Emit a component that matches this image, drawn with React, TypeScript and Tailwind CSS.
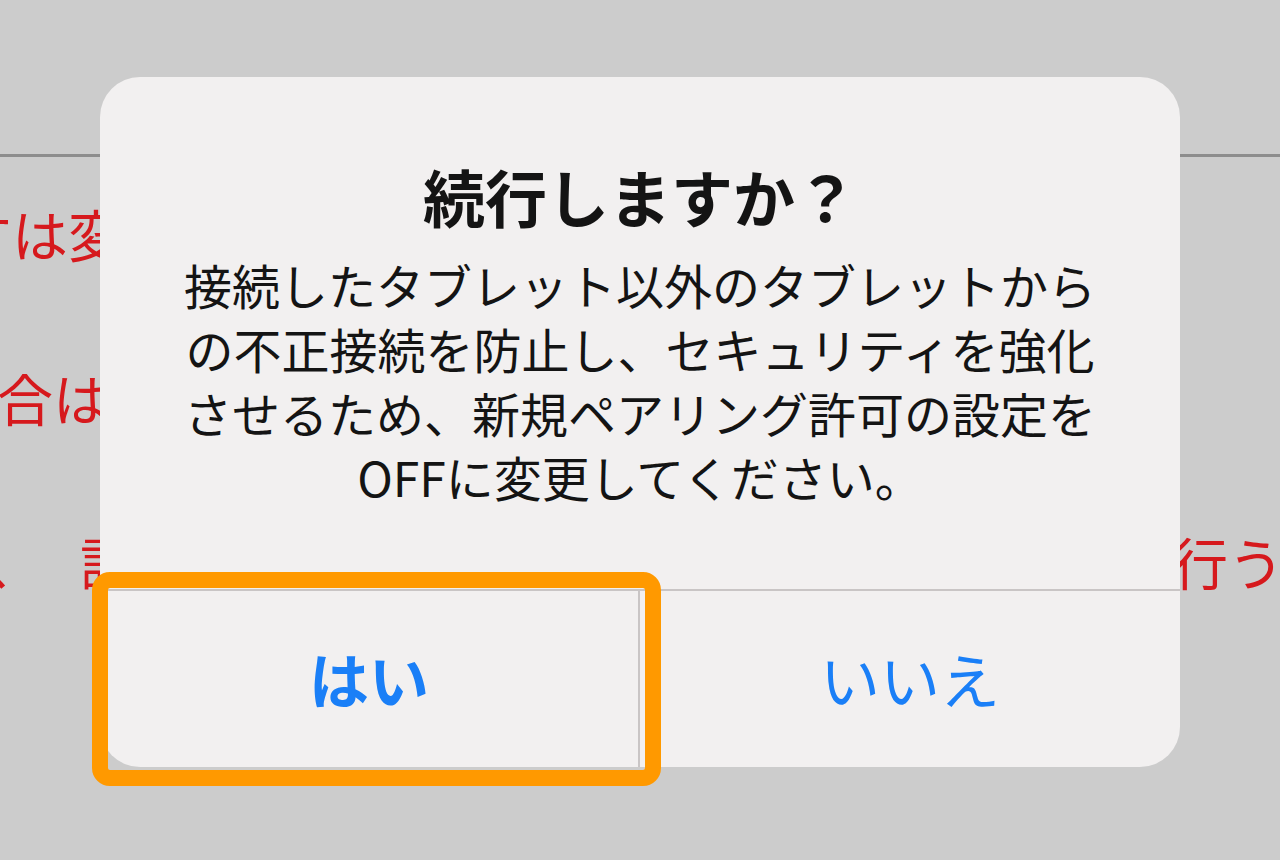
const jp = { fontFamily: '"Noto Sans CJK JP", "Noto Sans", sans-serif' };

function BackgroundPage() {
  return (
    <div className="flex h-full flex-col">
      <div className="h-[157px] border-b-[3px] border-[#8d8d8d]" />
      <div className="flex flex-col gap-[84px] pt-[36px] text-[56px] leading-[80px] text-[#d6191d] whitespace-nowrap">
        <div className="ml-[-44px]">すは変</div>
        <div className="ml-[-3px]">合は</div>
        <div className="flex justify-between">
          <div className="ml-[-14px]">
            <span>、</span>
            <span className="ml-[38px]">設</span>
          </div>
          <div className="mr-[-4px]">行う</div>
        </div>
      </div>
    </div>
  );
}

function ConfirmDialog() {
  return (
    <div className="absolute left-[100px] top-[77px] flex h-[690px] w-[1080px] flex-col overflow-hidden rounded-[40px] bg-[#f2f0f0]">
      <div className="flex h-[512px] flex-col items-center pt-[83px] text-[#141414]">
        <h1 className="text-[62px] font-bold leading-[72px]">続行しますか？</h1>
        <p className="mt-[20px] text-center text-[48px] leading-[64px]">
          <span className="block">接続したタブレット以外のタブレットから</span>
          <span className="block">の不正接続を防止し、セキュリティを強化</span>
          <span className="block">させるため、新規ペアリング許可の設定を</span>
          <span className="block">OFFに変更してください。</span>
        </p>
      </div>
      <div className="grid flex-1 grid-cols-2 border-t-2 border-[#c9c5c5] text-[60px] text-[#1a7ff7]">
        <button className="flex items-center justify-center border-r-2 border-[#c9c5c5] pb-[2px] font-bold">
          はい
        </button>
        <button className="flex items-center justify-center pb-[2px]">いいえ</button>
      </div>
    </div>
  );
}

export default function App() {
  return (
    <div className="relative h-[860px] w-full overflow-hidden bg-[#cccccc]" style={jp}>
      <BackgroundPage />
      <ConfirmDialog />
      {/* highlight around the "はい" button */}
      <div className="pointer-events-none absolute left-[92px] top-[572px] h-[214px] w-[569px] rounded-[18px] border-[16px] border-[#ff9900]" />
    </div>
  );
}
